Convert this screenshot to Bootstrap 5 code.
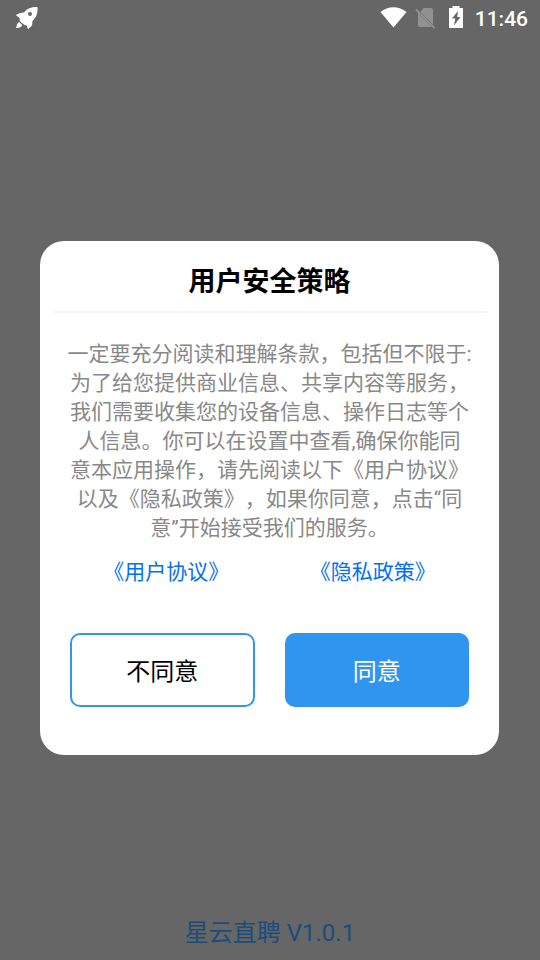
<!DOCTYPE html>
<html lang="zh-CN">
<head>
<meta charset="utf-8">
<meta name="viewport" content="width=device-width, initial-scale=1">
<title>用户安全策略</title>
<link rel="stylesheet" href="https://cdn.jsdelivr.net/npm/bootstrap@5.3.0/dist/css/bootstrap.min.css">
<style>
  body { background: #666; font-family: Roboto, "Noto Sans CJK SC", sans-serif; text-spacing-trim: space-all; }
  .status-bar { height: 36px; padding: 0 12px 0 14px; color: #fff; }
  .clock { font-size: 21px; line-height: 36px; font-weight: 500; padding-top: 2px; }
  .side { flex: 1 1 0; }
  .policy { margin: 0 41px 0 40px; border-radius: 24px; padding-bottom: 48px; }
  .policy-title { font-size: 27px; line-height: 40px; font-weight: 700; color: #000; padding: 21px 0 9px; margin: 0 12px; border-bottom: 2px solid #f5f5f5; }
  .policy-text { font-size: 21px; line-height: 29px; color: #888; padding: 27px 24px 0; }
  .policy-links { padding: 14px 23px 0; font-size: 21px; line-height: 30px; }
  .policy-links a { color: #0070f8; }
  .policy-actions { padding: 46px 30px 0; gap: 30px; }
  .policy-btn { flex: 1 1 0; height: 74px; border: 2px solid #2f95ee; border-radius: 10px; font-size: 24px; padding-top: 4px; }
  .policy-btn.decline { color: #000; background: #fff; }
  .policy-btn.accept { color: #fff; background: #2f95ee; }
  .version { color: #1b4d7b; font-size: 24px; line-height: 36px; }
  .version span { padding-bottom: 9px; }
</style>
<script src="https://cdn.jsdelivr.net/npm/bootstrap@5.3.0/dist/js/bootstrap.bundle.min.js"></script>
</head>
<body>
<div class="d-flex flex-column min-vh-100">
  <header class="status-bar d-flex align-items-center justify-content-between">
    <svg width="24" height="24" viewBox="0 0 24 24" aria-hidden="true">
      <path fill="#fff" fill-rule="evenodd" d="M23.500 1C18 .8 13 2.500 10 6.500L6 7 1.800 9l3.700 3 .5 3.500 4.500 3.500 2.200.500 1.300 3.800 4-3.800.5-4.500C22.500 11.500 24 6.500 23.500 1ZM16 6a2 2 0 1 1 0 4 2 2 0 0 1 0-4ZM5 16 8.200 19c-.5 1.800-2.500 3-6 3 .3-2.800 1.200-5 2.800-6Z"/>
    </svg>
    <div class="d-flex align-items-center">
      <svg width="27" height="22" viewBox="0 0 27 22" aria-hidden="true"><path fill="#fff" d="M.5 5C8-1.500 19-1.500 26.500 5L13.500 20.500Z"/></svg>
      <svg class="ms-2" width="22" height="22" viewBox="0 0 22 22" aria-hidden="true">
        <path fill="#919191" d="M8.500 1H16a2 2 0 0 1 2 2v14.500L5.500 5ZM3 6 17 20H5a2 2 0 0 1-2-2Z"/>
        <path stroke="#919191" stroke-width="1.800" d="M1 2.500 19.500 21"/>
      </svg>
      <svg class="ms-2 me-2" width="22" height="24" viewBox="0 0 22 24" aria-hidden="true">
        <path fill="#fff" fill-rule="evenodd" d="M7.500 0h7v2H18v20H4V2h3.500ZM13 5 7 12.500h3.300L9 19.500 15.500 11h-3.300Z"/>
      </svg>
      <span class="clock">11:46</span>
    </div>
  </header>
  <div class="side"></div>
  <main class="policy bg-white" role="dialog" aria-labelledby="policy-title">
    <h1 id="policy-title" class="policy-title text-center">用户安全策略</h1>
    <p class="policy-text text-center mb-0">一定要充分阅读和理解条款，包括但不限于:<br>为了给您提供商业信息、共享内容等服务，<br>我们需要收集您的设备信息、操作日志等个<br>人信息。你可以在设置中查看,确保你能同<br>意本应用操作，请先阅读以下《用户协议》<br>以及《隐私政策》，如果你同意，点击“同<br>意”开始接受我们的服务。</p>
    <nav class="policy-links d-flex text-center">
      <div class="w-50"><a class="text-decoration-none" href="#agreement">《用户协议》</a></div>
      <div class="w-50"><a class="text-decoration-none" href="#privacy">《隐私政策》</a></div>
    </nav>
    <div class="policy-actions d-flex">
      <button type="button" class="policy-btn decline">不同意</button>
      <button type="button" class="policy-btn accept">同意</button>
    </div>
  </main>
  <footer class="side version d-flex align-items-end justify-content-center"><span>星云直聘 V1.0.1</span></footer>
</div>
</body>
</html>
